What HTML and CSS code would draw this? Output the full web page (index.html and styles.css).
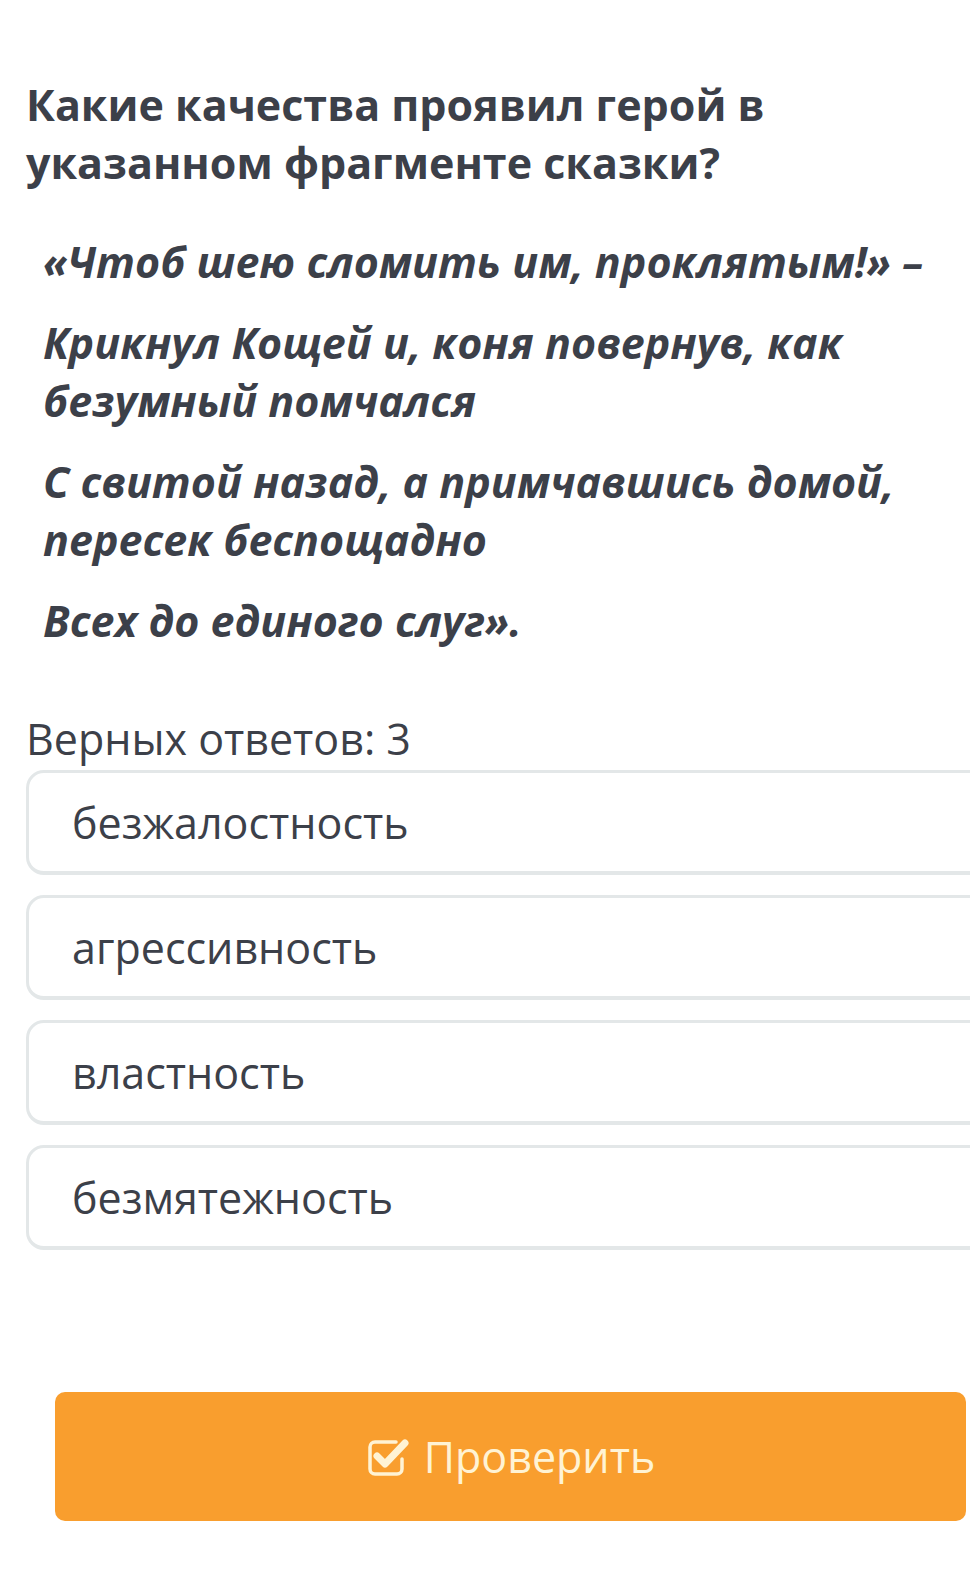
FILE: index.html
```html
<!DOCTYPE html>
<html>
<head>
<meta charset="utf-8">
<meta name="viewport" content="width=device-width, initial-scale=1.0">
<link rel="stylesheet" href="styles.css">
<title>Вопрос</title>
</head>
<body>

  <div class="question">
    <h1 class="q-title">Какие качества проявил герой в указанном фрагменте сказки?</h1>

    <!-- fragment of the tale -->
    <div class="quote">
      <p>«Чтоб шею сломить им, проклятым!» –</p>
      <p>Крикнул Кощей и, коня повернув, как безумный помчался</p>
      <p>С свитой назад, а примчавшись домой, пересек беспощадно</p>
      <p>Всех до единого слуг».</p>
    </div>

    <div class="hint">Верных ответов: 3</div>

    <div class="options">
      <div class="option">безжалостность</div>
      <div class="option">агрессивность</div>
      <div class="option">властность</div>
      <div class="option">безмятежность</div>
    </div>
  </div>

  <div class="actions">
    <button class="check-btn" type="button">
      <svg class="check-icon" width="44" height="40" viewBox="0 0 44 40">
        <path d="M30 5H9a5 5 0 0 0-5 5v22a5 5 0 0 0 5 5h22a5 5 0 0 0 5-5V22" fill="none" stroke="#fff3d4" stroke-width="3.5" stroke-linecap="round"/>
        <path d="M11 19l8 8L39 6" fill="none" stroke="#fff3d4" stroke-width="7" stroke-linecap="round" stroke-linejoin="round"/>
      </svg>
      <span>Проверить</span>
    </button>
  </div>

</body>
</html>
```

FILE: styles.css
```css
* {
  box-sizing: border-box;
}

body {
  margin: 0;
  background-color: #ffffff;
  font-family: "Open Sans", "Noto Sans", sans-serif;
  color: #3c4049;
  overflow-x: hidden;
}

.question {
  padding: 76px 0 0 26px;
}

.q-title {
  margin: 0;
  font-size: 43px;
  line-height: 58px;
  font-weight: 700;
  width: 800px;
}

.quote {
  margin-top: 41px;
  padding-left: 17px;
  padding-right: 20px;
}

.quote p {
  margin: 0 0 23px 0;
  font-size: 43px;
  line-height: 58px;
  font-weight: 700;
  font-style: italic;
}

.quote p:last-child {
  margin-bottom: 0;
}

.hint {
  margin-top: 64px;
  font-size: 43px;
  line-height: 50px;
}

.options {
  margin-top: 6px;
  display: flex;
  flex-direction: column;
  gap: 20px;
}

.option {
  width: 1000px;
  height: 105px;
  border: 3px solid #e3e7e8;
  border-bottom-width: 4px;
  border-radius: 18px;
  padding-left: 43px;
  display: flex;
  align-items: center;
  font-size: 43px;
}

.actions {
  padding: 142px 4px 0 55px;
}

.check-btn {
  width: 100%;
  height: 129px;
  border: none;
  border-radius: 10px;
  background-color: #f99e2e;
  color: #fff3d4;
  font-family: "Open Sans", "Noto Sans", sans-serif;
  font-size: 43px;
  display: flex;
  align-items: center;
  justify-content: center;
  gap: 14px;
  cursor: pointer;
}

.check-icon {
  display: block;
}
```
